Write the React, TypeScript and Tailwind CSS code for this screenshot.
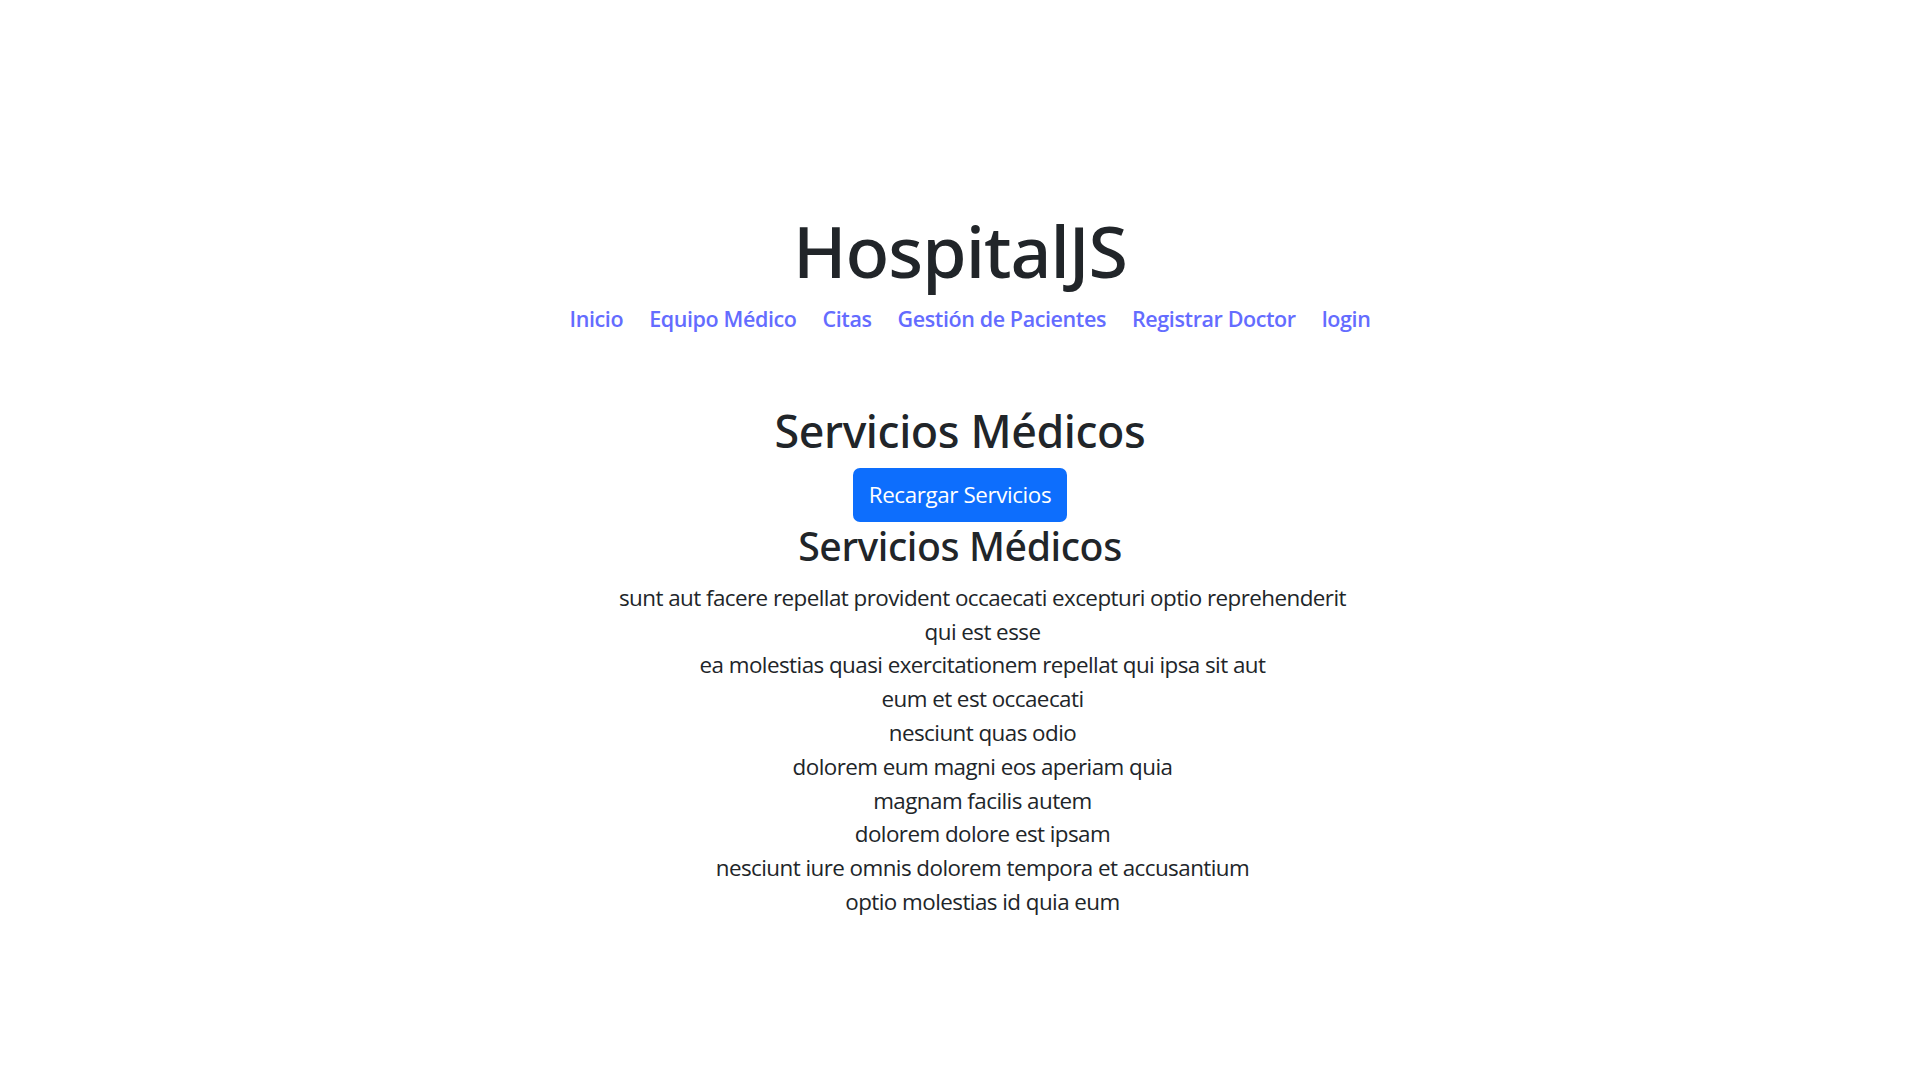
import React from 'react';

const links = ['Inicio', 'Equipo Médico', 'Citas', 'Gestión de Pacientes', 'Registrar Doctor', 'login'];

const servicios = [
  'sunt aut facere repellat provident occaecati excepturi optio reprehenderit',
  'qui est esse',
  'ea molestias quasi exercitationem repellat qui ipsa sit aut',
  'eum et est occaecati',
  'nesciunt quas odio',
  'dolorem eum magni eos aperiam quia',
  'magnam facilis autem',
  'dolorem dolore est ipsam',
  'nesciunt iure omnis dolorem tempora et accusantium',
  'optio molestias id quia eum',
];

const App = () => {
  return (
    <div className="min-h-screen bg-white pt-[211px] text-center font-['Open_Sans',sans-serif] text-[#212529]">
      <header>
        <h1 className="font-['Noto_Sans',sans-serif] text-[71.7px] leading-[1.1] font-medium tracking-[-1px]">HospitalJS</h1>
        <nav className="mt-[12px] flex justify-center gap-[26px] pl-[20px] text-[21.5px] leading-[1.56] font-semibold tracking-[-0.4px]">
          {links.map((l) => (
            <a key={l} href="#" className="text-[#646cff]">
              {l}
            </a>
          ))}
        </nav>
      </header>

      <main className="mt-[69px] flex flex-col items-center">
        <h2 className="mb-[10px] font-['Noto_Sans',sans-serif] text-[44.8px] leading-[1.2] font-medium tracking-[-0.4px]">
          Servicios Médicos
        </h2>
        <button className="rounded-[7px] bg-[#0d6efd] px-[16px] py-[10px] text-[22.4px] leading-[1.5] tracking-[-0.4px] text-white">
          Recargar Servicios
        </button>
        <h3 className="font-['Noto_Sans',sans-serif] text-[39.2px] leading-[1.2] font-medium tracking-[-0.4px]">
          Servicios Médicos
        </h3>
        <ul className="mt-[12px] pl-[45px] text-[22.4px] leading-[33.8px] tracking-[-0.55px]">
          {servicios.map((s) => (
            <li key={s}>{s}</li>
          ))}
        </ul>
      </main>
    </div>
  );
};

export default App;
